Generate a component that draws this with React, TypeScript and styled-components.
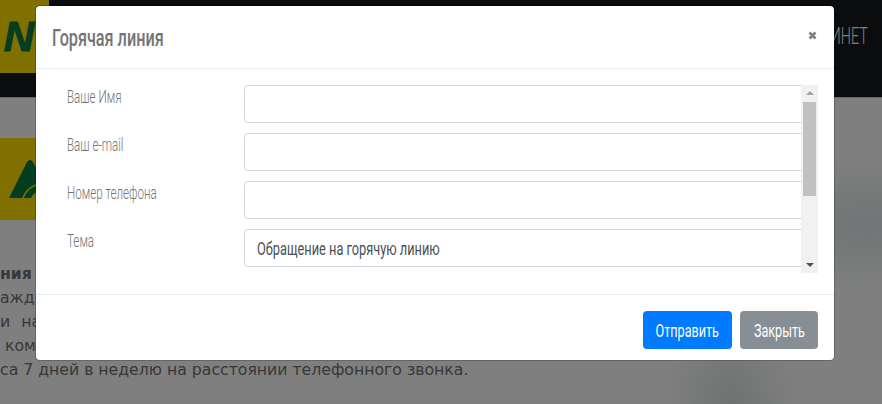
import React from 'react';
import styled, { createGlobalStyle } from 'styled-components';

const GlobalStyle = createGlobalStyle`
  html, body {
    margin: 0;
    padding: 0;
    height: 100%;
    overflow: hidden;
    background: #fff;
  }
`;

const LABELS = ['Ваше Имя', 'Ваш e-mail', 'Номер телефона', 'Тема'];

const App = () => {
  return (
    <Page>
      <GlobalStyle />
      <Header>
        <LogoBadge>
          <LogoLetter>N</LogoLetter>
        </LogoBadge>
        <CabinetLink>КАБИНЕТ</CabinetLink>
      </Header>
      <Content>
        <BigLogo>
          <svg width="60" height="82" viewBox="0 0 60 82">
            <path d="M9 60 L27 24 Q30 20 33 24 L52 60 Z" fill="#087a3f" />
            <path d="M23 60 Q28 47 42 46" fill="none" stroke="#ffe000" strokeWidth="1.6" />
            <path d="M31 60 Q33 54 42 53 L48 60 Z" fill="#ffe000" />
          </svg>
        </BigLogo>
        <TextBlock>
          <strong>ния</strong>
          <span>ажды</span>
          <WideLine>и на</WideLine>
          <IndentLine>ком</IndentLine>
          <span>са 7 дней в неделю на расстоянии телефонного звонка.</span>
        </TextBlock>
      </Content>
      <Backdrop />
      <Modal>
        <ModalHeader>
          <ModalTitle>Горячая линия</ModalTitle>
          <CloseIcon>
            <svg width="9" height="9" viewBox="0 0 9 9">
              <path d="M1.5 1.5 L7.5 7.5 M7.5 1.5 L1.5 7.5" stroke="#808080" strokeWidth="2.6" />
            </svg>
          </CloseIcon>
        </ModalHeader>
        <ModalBody>
          <FormArea>
            {LABELS.map((label, i) => (
              <FormRow key={label}>
                <FieldLabel>{label}</FieldLabel>
                <Field>{i === 3 && <FieldValue>Обращение на горячую линию</FieldValue>}</Field>
              </FormRow>
            ))}
          </FormArea>
          <Scrollbar>
            <ArrowUp />
            <Thumb />
            <ArrowDown />
          </Scrollbar>
        </ModalBody>
        <ModalFooter>
          <Button $variant="primary" $width={89}>
            <ButtonText>Отправить</ButtonText>
          </Button>
          <Button $variant="secondary" $width={78}>
            <ButtonText>Закрыть</ButtonText>
          </Button>
        </ModalFooter>
      </Modal>
    </Page>
  );
};

export default App;

const Page = styled.div`
  position: relative;
  width: 882px;
  height: 404px;
  overflow: hidden;
  background:
    radial-gradient(ellipse 70px 90px at 730px 404px, #e0e5e5 0%, rgba(224, 229, 229, 0) 100%),
    radial-gradient(ellipse 160px 70px at 870px 225px, #e2eaea 0%, rgba(226, 234, 234, 0) 100%),
    #ffffff;
`;

const Header = styled.header`
  display: flex;
  justify-content: space-between;
  height: 97px;
  background: #14181c;
  border-bottom: 1px solid #ffe000;
`;

const LogoBadge = styled.div`
  width: 49px;
  height: 73px;
  background: #ffe000;
  display: flex;
  align-items: center;
  justify-content: flex-end;
  padding-right: 15px;
  box-sizing: border-box;
`;

const LogoLetter = styled.span`
  flex-shrink: 0;
  font: italic 700 42px "Liberation Sans", sans-serif;
  color: #087a3f;
  -webkit-text-stroke: 1px #087a3f;
`;

const CabinetLink = styled.span`
  display: inline-block;
  font: 300 24px Roboto, sans-serif;
  color: #fff;
  padding: 22px 23px 0 0;
  transform: scaleX(0.6);
  transform-origin: right;
`;

const Content = styled.main`
  display: flex;
  flex-direction: column;
  padding-top: 40px;
`;

const BigLogo = styled.div`
  width: 60px;
  height: 82px;
  background: #ffe000;
  display: flex;
`;

const TextBlock = styled.div`
  display: flex;
  flex-direction: column;
  margin-top: 42px;
  font: 15.7px/24px "DejaVu Sans", sans-serif;
  color: #707070;
  white-space: nowrap;
`;

const WideLine = styled.span`
  word-spacing: 6px;
`;

const IndentLine = styled.span`
  padding-left: 5px;
`;

const Backdrop = styled.div`
  position: absolute;
  inset: 0;
  background: rgba(0, 0, 0, 0.5);
`;

const Modal = styled.div`
  position: absolute;
  left: 35px;
  top: 5px;
  width: 800px;
  height: 356px;
  display: flex;
  flex-direction: column;
  box-sizing: border-box;
  background: #fff;
  border-radius: 5px;
  border: 1px solid rgba(0, 0, 0, 0.2);
  background-clip: padding-box;
`;

const ModalHeader = styled.div`
  display: flex;
  justify-content: space-between;
  align-items: center;
  height: 62px;
  padding: 0 16px;
  border-bottom: 1px solid #e9ecef;
`;

const ModalTitle = styled.h5`
  margin: 2px 0 0;
  font: 500 23px Roboto, sans-serif;
  white-space: nowrap;
  color: #747474;
  transform: scaleX(0.705);
  transform-origin: left;
`;

const CloseIcon = styled.span`
  display: flex;
  margin-bottom: 4px;
  margin-right: 1px;
`;

const ModalBody = styled.div`
  display: flex;
  height: 188px;
  padding: 16px 16px 21px;
`;

const FormArea = styled.div`
  flex: 1;
  min-width: 0;
  overflow: hidden;
  display: flex;
  flex-direction: column;
  gap: 10px;
`;

const FormRow = styled.div`
  display: grid;
  grid-template-columns: 177px 600px;
  padding-left: 15px;
  flex-shrink: 0;
`;

const FieldLabel = styled.label`
  font: 300 18px/24px Roboto, sans-serif;
  color: #747474;
  white-space: nowrap;
  transform: scaleX(0.645);
  transform-origin: left;
`;

const Field = styled.div`
  box-sizing: border-box;
  height: 38px;
  padding: 0 12px;
  display: flex;
  align-items: center;
  background: #fff;
  border: 1px solid #ced4da;
  border-radius: 4px;
`;

const FieldValue = styled.span`
  font: 400 18px Roboto, sans-serif;
  color: #495057;
  white-space: nowrap;
  transform: scaleX(0.71);
  transform-origin: left;
`;

const Scrollbar = styled.div`
  width: 17px;
  flex-shrink: 0;
  display: flex;
  flex-direction: column;
  align-items: center;
  background: #f1f1f1;
`;

const ArrowUp = styled.span`
  margin-top: 6px;
  border: 4px solid transparent;
  border-top: 0;
  border-bottom: 4px solid #a3a3a3;
`;

const Thumb = styled.div`
  width: 100%;
  height: 94px;
  margin-top: 7px;
  padding: 0 2px;
  box-sizing: border-box;
  background: #c1c1c1 content-box;
`;

const ArrowDown = styled.span`
  margin-top: auto;
  margin-bottom: 6px;
  border: 4px solid transparent;
  border-bottom: 0;
  border-top: 4px solid #505050;
`;

const ModalFooter = styled.div`
  display: flex;
  justify-content: flex-end;
  align-items: flex-start;
  gap: 8px;
  flex: 1;
  padding: 16px 16px 0;
  border-top: 1px solid #e9ecef;
`;

const Button = styled.div<{ $variant: 'primary' | 'secondary'; $width: number }>`
  width: ${(p) => p.$width}px;
  height: 38px;
  display: flex;
  align-items: center;
  justify-content: center;
  border-radius: 4px;
  color: #fff;
  background: ${(p) => (p.$variant === 'primary' ? '#007bff' : '#868e96')};
`;

const ButtonText = styled.span`
  font: 400 18px Roboto, sans-serif;
  white-space: nowrap;
  transform: scaleX(0.7);
`;
